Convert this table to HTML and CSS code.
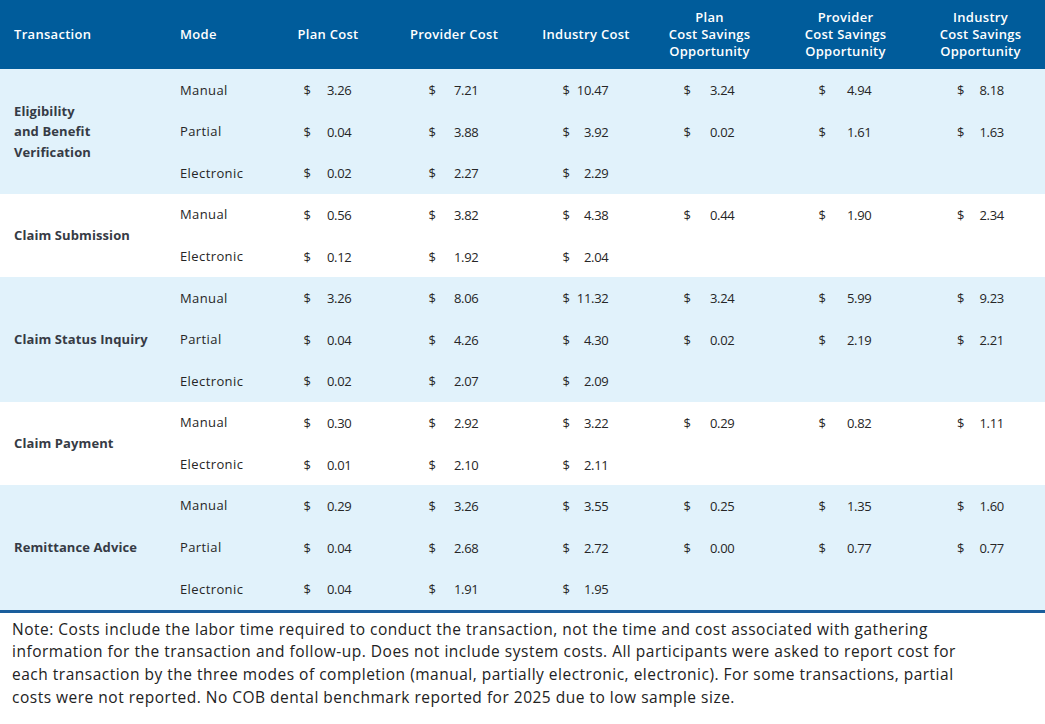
FILE: index.html
```html
<!DOCTYPE html>
<html>
<head>
<meta charset="utf-8">
<link rel="stylesheet" href="styles.css">
</head>
<body>
<table class="costs">
  <colgroup>
    <col class="c-tx"><col class="c-mode"><col class="c-plan"><col class="c-prov"><col class="c-ind"><col class="c-psav"><col class="c-vsav"><col class="c-isav">
  </colgroup>
  <thead>
    <tr>
      <th class="left tx">Transaction</th>
      <th class="left mode">Mode</th>
      <th>Plan Cost</th>
      <th>Provider Cost</th>
      <th>Industry Cost</th>
      <th>Plan<br>Cost Savings<br>Opportunity</th>
      <th>Provider<br>Cost Savings<br>Opportunity</th>
      <th class="last">Industry<br>Cost Savings<br>Opportunity</th>
    </tr>
  </thead>
  <tbody class="shade">
    <tr>
      <td class="tx" rowspan="3">Eligibility<br>and Benefit<br>Verification</td>
      <td class="mode">Manual</td>
      <td class="v"><span class="amt w-plan"><span>$</span><span>3.26</span></span></td>
      <td class="v"><span class="amt w-prov"><span>$</span><span>7.21</span></span></td>
      <td class="v"><span class="amt w-ind"><span>$</span><span>10.47</span></span></td>
      <td class="v"><span class="amt w-psav"><span>$</span><span>3.24</span></span></td>
      <td class="v"><span class="amt w-vsav"><span>$</span><span>4.94</span></span></td>
      <td class="v last"><span class="amt w-isav"><span>$</span><span>8.18</span></span></td>
    </tr>
    <tr>
      <td class="mode">Partial</td>
      <td class="v"><span class="amt w-plan"><span>$</span><span>0.04</span></span></td>
      <td class="v"><span class="amt w-prov"><span>$</span><span>3.88</span></span></td>
      <td class="v"><span class="amt w-ind"><span>$</span><span>3.92</span></span></td>
      <td class="v"><span class="amt w-psav"><span>$</span><span>0.02</span></span></td>
      <td class="v"><span class="amt w-vsav"><span>$</span><span>1.61</span></span></td>
      <td class="v last"><span class="amt w-isav"><span>$</span><span>1.63</span></span></td>
    </tr>
    <tr>
      <td class="mode">Electronic</td>
      <td class="v"><span class="amt w-plan"><span>$</span><span>0.02</span></span></td>
      <td class="v"><span class="amt w-prov"><span>$</span><span>2.27</span></span></td>
      <td class="v"><span class="amt w-ind"><span>$</span><span>2.29</span></span></td>
      <td class="v"></td>
      <td class="v"></td>
      <td class="v last"></td>
    </tr>
  </tbody>
  <tbody class="plain">
    <tr>
      <td class="tx" rowspan="2">Claim Submission</td>
      <td class="mode">Manual</td>
      <td class="v"><span class="amt w-plan"><span>$</span><span>0.56</span></span></td>
      <td class="v"><span class="amt w-prov"><span>$</span><span>3.82</span></span></td>
      <td class="v"><span class="amt w-ind"><span>$</span><span>4.38</span></span></td>
      <td class="v"><span class="amt w-psav"><span>$</span><span>0.44</span></span></td>
      <td class="v"><span class="amt w-vsav"><span>$</span><span>1.90</span></span></td>
      <td class="v last"><span class="amt w-isav"><span>$</span><span>2.34</span></span></td>
    </tr>
    <tr>
      <td class="mode">Electronic</td>
      <td class="v"><span class="amt w-plan"><span>$</span><span>0.12</span></span></td>
      <td class="v"><span class="amt w-prov"><span>$</span><span>1.92</span></span></td>
      <td class="v"><span class="amt w-ind"><span>$</span><span>2.04</span></span></td>
      <td class="v"></td>
      <td class="v"></td>
      <td class="v last"></td>
    </tr>
  </tbody>
  <tbody class="shade">
    <tr>
      <td class="tx" rowspan="3">Claim Status Inquiry</td>
      <td class="mode">Manual</td>
      <td class="v"><span class="amt w-plan"><span>$</span><span>3.26</span></span></td>
      <td class="v"><span class="amt w-prov"><span>$</span><span>8.06</span></span></td>
      <td class="v"><span class="amt w-ind"><span>$</span><span>11.32</span></span></td>
      <td class="v"><span class="amt w-psav"><span>$</span><span>3.24</span></span></td>
      <td class="v"><span class="amt w-vsav"><span>$</span><span>5.99</span></span></td>
      <td class="v last"><span class="amt w-isav"><span>$</span><span>9.23</span></span></td>
    </tr>
    <tr>
      <td class="mode">Partial</td>
      <td class="v"><span class="amt w-plan"><span>$</span><span>0.04</span></span></td>
      <td class="v"><span class="amt w-prov"><span>$</span><span>4.26</span></span></td>
      <td class="v"><span class="amt w-ind"><span>$</span><span>4.30</span></span></td>
      <td class="v"><span class="amt w-psav"><span>$</span><span>0.02</span></span></td>
      <td class="v"><span class="amt w-vsav"><span>$</span><span>2.19</span></span></td>
      <td class="v last"><span class="amt w-isav"><span>$</span><span>2.21</span></span></td>
    </tr>
    <tr>
      <td class="mode">Electronic</td>
      <td class="v"><span class="amt w-plan"><span>$</span><span>0.02</span></span></td>
      <td class="v"><span class="amt w-prov"><span>$</span><span>2.07</span></span></td>
      <td class="v"><span class="amt w-ind"><span>$</span><span>2.09</span></span></td>
      <td class="v"></td>
      <td class="v"></td>
      <td class="v last"></td>
    </tr>
  </tbody>
  <tbody class="plain">
    <tr>
      <td class="tx" rowspan="2">Claim Payment</td>
      <td class="mode">Manual</td>
      <td class="v"><span class="amt w-plan"><span>$</span><span>0.30</span></span></td>
      <td class="v"><span class="amt w-prov"><span>$</span><span>2.92</span></span></td>
      <td class="v"><span class="amt w-ind"><span>$</span><span>3.22</span></span></td>
      <td class="v"><span class="amt w-psav"><span>$</span><span>0.29</span></span></td>
      <td class="v"><span class="amt w-vsav"><span>$</span><span>0.82</span></span></td>
      <td class="v last"><span class="amt w-isav"><span>$</span><span>1.11</span></span></td>
    </tr>
    <tr>
      <td class="mode">Electronic</td>
      <td class="v"><span class="amt w-plan"><span>$</span><span>0.01</span></span></td>
      <td class="v"><span class="amt w-prov"><span>$</span><span>2.10</span></span></td>
      <td class="v"><span class="amt w-ind"><span>$</span><span>2.11</span></span></td>
      <td class="v"></td>
      <td class="v"></td>
      <td class="v last"></td>
    </tr>
  </tbody>
  <tbody class="shade lastgroup">
    <tr>
      <td class="tx" rowspan="3">Remittance Advice</td>
      <td class="mode">Manual</td>
      <td class="v"><span class="amt w-plan"><span>$</span><span>0.29</span></span></td>
      <td class="v"><span class="amt w-prov"><span>$</span><span>3.26</span></span></td>
      <td class="v"><span class="amt w-ind"><span>$</span><span>3.55</span></span></td>
      <td class="v"><span class="amt w-psav"><span>$</span><span>0.25</span></span></td>
      <td class="v"><span class="amt w-vsav"><span>$</span><span>1.35</span></span></td>
      <td class="v last"><span class="amt w-isav"><span>$</span><span>1.60</span></span></td>
    </tr>
    <tr>
      <td class="mode">Partial</td>
      <td class="v"><span class="amt w-plan"><span>$</span><span>0.04</span></span></td>
      <td class="v"><span class="amt w-prov"><span>$</span><span>2.68</span></span></td>
      <td class="v"><span class="amt w-ind"><span>$</span><span>2.72</span></span></td>
      <td class="v"><span class="amt w-psav"><span>$</span><span>0.00</span></span></td>
      <td class="v"><span class="amt w-vsav"><span>$</span><span>0.77</span></span></td>
      <td class="v last"><span class="amt w-isav"><span>$</span><span>0.77</span></span></td>
    </tr>
    <tr>
      <td class="mode">Electronic</td>
      <td class="v"><span class="amt w-plan"><span>$</span><span>0.04</span></span></td>
      <td class="v"><span class="amt w-prov"><span>$</span><span>1.91</span></span></td>
      <td class="v"><span class="amt w-ind"><span>$</span><span>1.95</span></span></td>
      <td class="v"></td>
      <td class="v"></td>
      <td class="v last"></td>
    </tr>
  </tbody>
</table>
<p class="note">Note: Costs include the labor time required to conduct the transaction, not the time and cost associated with gathering<br>information for the transaction and follow-up. Does not include system costs. All participants were asked to report cost for<br>each transaction by the three modes of completion (manual, partially electronic, electronic). For some transactions, partial<br>costs were not reported. No COB dental benchmark reported for 2025 due to low sample size.</p>
</body>
</html>
```

FILE: styles.css
```css
html, body {
  margin: 0;
  padding: 0;
  background: #ffffff;
}

body {
  width: 1045px;
  font-family: "Open Sans", "Lato", sans-serif;
  color: #262626;
}

.costs {
  width: 1045px;
  border-collapse: collapse;
  table-layout: fixed;
  border-bottom: 3px solid #1a5e9c;
}

.c-tx { width: 166px; }
.c-mode { width: 100px; }
.c-plan { width: 124px; }
.c-prov { width: 128px; }
.c-ind { width: 136px; }
.c-psav { width: 111px; }
.c-vsav { width: 161px; }
.c-isav { width: 119px; }

thead th {
  height: 69px;
  padding: 0;
  background: #005c9b;
  color: #ffffff;
  font-size: 13px;
  font-weight: 600;
  line-height: 17px;
  text-align: center;
  vertical-align: middle;
  letter-spacing: 0.3px;
}

thead th.left {
  text-align: left;
}

th.tx, td.tx {
  padding-left: 14px;
}

th.mode, td.mode {
  padding-left: 14px;
}

th.last, td.last {
  padding-right: 10px;
}

tbody.shade td {
  background: #e1f2fb;
}

tbody.plain td {
  background: #ffffff;
}

tbody td {
  height: 41.6px;
  padding-top: 0;
  padding-bottom: 0;
  font-size: 13px;
  line-height: 20.5px;
  vertical-align: middle;
}

td.tx {
  font-weight: 700;
  color: #363b45;
  text-align: left;
  font-size: 13px;
  letter-spacing: 0.1px;
}

td.mode {
  color: #262626;
  text-align: left;
  letter-spacing: 0.4px;
}

td.v {
  text-align: center;
  padding-left: 0;
  letter-spacing: -0.3px;
}

.amt {
  display: inline-flex;
  justify-content: space-between;
  vertical-align: middle;
}

.w-plan { width: 48px; }
.w-prov { width: 50px; }
.w-ind { width: 46px; }
.w-psav { width: 51px; }
.w-vsav { width: 53px; }
.w-isav { width: 47px; }

.note {
  margin: 0;
  padding: 5px 12px 0;
  font-size: 15.5px;
  line-height: 22.7px;
  color: #222222;
  letter-spacing: 0.5px;
}
```
